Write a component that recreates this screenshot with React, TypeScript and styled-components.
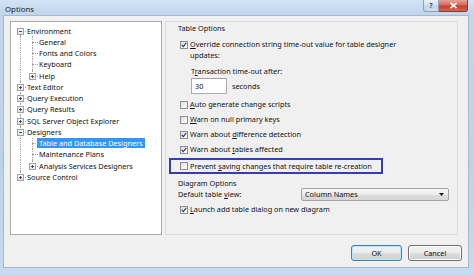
import React from 'react';
import styled, { createGlobalStyle } from 'styled-components';

const GlobalStyle = createGlobalStyle`
  html, body {
    margin: 0;
    padding: 0;
    background: #ffffff;
  }
  body {
    font-family: "Noto Sans", "Open Sans", sans-serif;
    font-size: 7.3px;
    color: #101010;
  }
`;

const colors = {
  frame: '#bcd3ec',
  face: '#f0f0f0',
  border: '#a9b8c8',
  treeLine: '#a3a3a3',
  select: '#3396f6',
  note: '#3a3cae'
};

const Window = styled.div`
  width: 474px;
  height: 275px;
  display: flex;
  flex-direction: column;
  background: linear-gradient(180deg, #d3e4f5 0%, #c2d7ee 12px, #bcd3ec 60%, #c6daf0 100%);
  overflow: hidden;
`;

const TitleBar = styled.div`
  height: 15px;
  flex: none;
  display: flex;
  align-items: flex-start;
  padding: 0 6px 0 5px;
`;

const Title = styled.span`
  font-size: 7.8px;
  line-height: 19px;
  color: #1a1a1a;
`;

const CaptionButtons = styled.div`
  margin-left: auto;
  display: flex;
  height: 12px;
`;

const CaptionButton = styled.span<{ $close?: boolean }>`
  width: ${ p => p.$close ? '29px' : '16px' };
  height: 12px;
  box-sizing: border-box;
  display: flex;
  align-items: center;
  justify-content: center;
  border: 1px solid ${ p => p.$close ? '#8c3b33' : '#8ea1b6' };
  border-top: none;
  border-left: ${ p => p.$close ? 'none' : undefined };
  border-radius: ${ p => p.$close ? '0 0 3px 0' : '0 0 0 3px' };
  background: ${ p => p.$close
    ? 'linear-gradient(180deg, #e6a196 0%, #d46a5b 45%, #c2402f 55%, #d7644f 100%)'
    : 'linear-gradient(180deg, #e9f0f7 0%, #d7e2ed 45%, #c3d2e2 55%, #d2dfec 100%)' };
  color: #33475d;
  font-size: 7px;
  font-weight: bold;
  line-height: 1;
`;

const Client = styled.div`
  flex: 1;
  margin: 0 5px 7px 3px;
  border: 1px solid ${ colors.border };
  background: ${ colors.face };
  display: flex;
  flex-direction: column;
  padding: 5px 0 0 6px;
`;

const Main = styled.div`
  display: flex;
  height: 214px;
`;

const Tree = styled.div`
  width: 152px;
  box-sizing: border-box;
  border: 1px solid #adadad;
  background: #ffffff;
  padding: 3px 0 0 3px;
`;

const TreeRow = styled.div`
  height: 11.25px;
  display: flex;
  align-items: center;
`;

const Cell = styled.span<{ $up?: boolean, $down?: boolean, $right?: boolean }>`
  position: relative;
  width: 12px;
  height: 100%;
  flex: none;

  &:before {
    content: "";
    display: ${ p => (p.$up || p.$down) ? 'block' : 'none' };
    position: absolute;
    left: 6px;
    top: ${ p => p.$up ? '0' : '50%' };
    bottom: ${ p => p.$down ? '0' : '50%' };
    border-left: 1px dotted ${ colors.treeLine };
  }

  &:after {
    content: "";
    display: ${ p => p.$right ? 'block' : 'none' };
    position: absolute;
    left: 6px;
    right: 0;
    top: 50%;
    border-top: 1px dotted ${ colors.treeLine };
  }
`;

const Expander = styled.span<{ $open?: boolean }>`
  position: absolute;
  z-index: 1;
  left: 3px;
  top: calc(50% - 3px);
  width: 7px;
  height: 7px;
  box-sizing: border-box;
  border: 1px solid #a2a2a2;
  background: linear-gradient(180deg, #ffffff, #e2e2e2);

  &:before {
    content: "";
    position: absolute;
    left: 1px;
    top: 2px;
    width: 3px;
    border-top: 1px solid #4a4a4a;
  }

  &:after {
    content: "";
    display: ${ p => p.$open ? 'none' : 'block' };
    position: absolute;
    left: 2px;
    top: 1px;
    height: 3px;
    border-left: 1px solid #4a4a4a;
  }
`;

const NodeLabel = styled.span<{ $selected?: boolean }>`
  margin-left: -1px;
  padding: 0 2px;
  height: 10px;
  line-height: 10px;
  white-space: nowrap;
  background: ${ p => p.$selected ? colors.select : 'transparent' };
  color: ${ p => p.$selected ? '#ffffff' : 'inherit' };
`;

const Panel = styled.div`
  margin-left: 3px;
  width: 293px;
  box-sizing: border-box;
  border: 1px solid #d5dce3;
  padding: 1px 8px 0 12px;
  display: flex;
  flex-direction: column;
`;

const GroupLabel = styled.div`
  line-height: 11px;
`;

const CheckRow = styled.div<{ $top?: number }>`
  display: flex;
  align-items: center;
  margin-top: ${ p => p.$top ?? 0 }px;
  line-height: 11px;
  min-height: 15px;
`;

const CheckText = styled.span`
  white-space: nowrap;
`;

const Box = styled.span`
  width: 8px;
  height: 8px;
  box-sizing: border-box;
  flex: none;
  margin: 0 2px;
  border: 1px solid #8e8f8f;
  background: linear-gradient(135deg, #d9d9d9 0%, #f4f4f4 60%, #ffffff 100%);
  display: flex;
  align-items: center;
  justify-content: center;
`;

const TallRow = styled(CheckRow)`
  align-items: flex-start;
  margin-top: 5px;

  ${Box} {
    margin-top: 2px;
  }
`;

const Indented = styled.div`
  margin-left: 13px;
`;

const FieldLabel = styled.div`
  margin-top: 5px;
  line-height: 11px;
`;

const InputRow = styled.div`
  display: flex;
  align-items: center;
  margin-top: 1px;
  height: 16px;
`;

const TextBox = styled.div`
  width: 36px;
  height: 16px;
  box-sizing: border-box;
  border: 1px solid #abadb3;
  border-top-color: #9ca0a8;
  background: #ffffff;
  padding-left: 3px;
  line-height: 14px;
  margin-right: 5px;
`;

const Highlight = styled.div`
  width: 214px;
  height: 16px;
  box-sizing: border-box;
  margin: 1px 0 0 -9px;
  border: 2px solid ${ colors.note };
  padding-left: 7px;
  display: flex;
  align-items: center;
`;

const DiagramLabel = styled.div`
  margin-top: 4px;
  line-height: 10px;
`;

const ViewRow = styled.div`
  display: flex;
  align-items: center;
  justify-content: space-between;
  height: 14px;
  margin-top: -1px;
`;

const Select = styled.div`
  width: 148px;
  height: 13px;
  box-sizing: border-box;
  border: 1px solid #a3a3a3;
  border-radius: 2px;
  background: linear-gradient(180deg, #f6f6f6 0%, #ebebeb 50%, #dddddd 51%, #d6d6d6 100%);
  display: flex;
  align-items: center;
  padding: 0 4px 0 3px;
  line-height: 11px;

  svg {
    margin-left: auto;
  }
`;

const Buttons = styled.div`
  display: flex;
  justify-content: flex-end;
  gap: 6px;
  margin-top: 10px;
  padding-right: 6px;
`;

const Button = styled.div<{ $default?: boolean, $width: number }>`
  width: ${ p => p.$width }px;
  height: 16px;
  box-sizing: border-box;
  border: 1px solid ${ p => p.$default ? '#3c7fb1' : '#707070' };
  border-radius: 3px;
  box-shadow: inset 0 0 0 1px ${ p => p.$default ? '#bfe6fa' : '#fbfbfb' };
  background: linear-gradient(180deg, #f2f2f2 0%, #ebebeb 48%, #dddddd 52%, #cfcfcf 100%);
  display: flex;
  align-items: center;
  justify-content: center;
  line-height: 11px;
`;

type Node = {
  label: string,
  guides: boolean[],
  first?: boolean,
  next?: boolean,
  toggle?: 'open' | 'closed',
  selected?: boolean
};

const nodes: Node[] = [
  { label: 'Environment', guides: [], first: true, next: true, toggle: 'open' },
  { label: 'General', guides: [true], next: true },
  { label: 'Fonts and Colors', guides: [true], next: true },
  { label: 'Keyboard', guides: [true], next: true },
  { label: 'Help', guides: [true], toggle: 'closed' },
  { label: 'Text Editor', guides: [], next: true, toggle: 'closed' },
  { label: 'Query Execution', guides: [], next: true, toggle: 'closed' },
  { label: 'Query Results', guides: [], next: true, toggle: 'closed' },
  { label: 'SQL Server Object Explorer', guides: [], next: true, toggle: 'closed' },
  { label: 'Designers', guides: [], next: true, toggle: 'open' },
  { label: 'Table and Database Designers', guides: [true], next: true, selected: true },
  { label: 'Maintenance Plans', guides: [true], next: true },
  { label: 'Analysis Services Designers', guides: [true], toggle: 'closed' },
  { label: 'Source Control', guides: [], toggle: 'closed' }
];

function Check(props: { checked?: boolean }) {
  return <Box>
    { props.checked ?
      <svg width="6" height="6" viewBox="0 0 6 6">
        <path d="M0.7 2.9 L2.3 4.6 L5.3 0.9" fill="none" stroke="#24416e" strokeWidth="1.2" />
      </svg> : null }
  </Box>
}

function TreeNode({ node }: { node: Node }) {
  return <TreeRow>
    { node.guides.map((g, i) => <Cell key={ i } $up={ g } $down={ g } />) }
    <Cell $up={ !node.first } $down={ node.next } $right>
      { node.toggle ? <Expander $open={ node.toggle === 'open' } /> : null }
    </Cell>
    <NodeLabel $selected={ node.selected }>{ node.label }</NodeLabel>
  </TreeRow>
}

export default function App() {
  return <>
    <GlobalStyle />
    <Window>
      <TitleBar>
        <Title>Options</Title>
        <CaptionButtons>
          <CaptionButton>?</CaptionButton>
          <CaptionButton $close>
            <svg width="9" height="7" viewBox="0 0 9 7">
              <path d="M1.5 0.8 L7.5 6.2 M7.5 0.8 L1.5 6.2" stroke="#ffffff" strokeWidth="1.6" />
            </svg>
          </CaptionButton>
        </CaptionButtons>
      </TitleBar>

      <Client>
        <Main>
          <Tree>
            { nodes.map(n => <TreeNode key={ n.label } node={ n } />) }
          </Tree>

          <Panel>
            <GroupLabel>Table Options</GroupLabel>

            <TallRow>
              <Check checked />
              <CheckText>
                <u>O</u>verride connection string time-out value for table designer<br />updates:
              </CheckText>
            </TallRow>

            <Indented>
              <FieldLabel>T<u>r</u>ansaction time-out after:</FieldLabel>
              <InputRow>
                <TextBox>30</TextBox>
                <span>seconds</span>
              </InputRow>
            </Indented>

            <CheckRow $top={ 3 }>
              <Check />
              <CheckText><u>A</u>uto generate change scripts</CheckText>
            </CheckRow>
            <CheckRow>
              <Check />
              <CheckText><u>W</u>arn on null primary keys</CheckText>
            </CheckRow>
            <CheckRow>
              <Check checked />
              <CheckText>Warn about <u>d</u>ifference detection</CheckText>
            </CheckRow>
            <CheckRow>
              <Check checked />
              <CheckText>Warn about <u>t</u>ables affected</CheckText>
            </CheckRow>

            <Highlight>
              <Check />
              <CheckText>Prevent <u>s</u>aving changes that require table re-creation</CheckText>
            </Highlight>

            <DiagramLabel>Diagram Options</DiagramLabel>
            <ViewRow>
              <span>Default table <u>v</u>iew:</span>
              <Select>
                <span>Column Names</span>
                <svg width="5" height="3" viewBox="0 0 5 3">
                  <path d="M0 0 H5 L2.5 3 Z" fill="#1f1f1f" />
                </svg>
              </Select>
            </ViewRow>

            <CheckRow $top={ 1 }>
              <Check checked />
              <CheckText><u>L</u>aunch add table dialog on new diagram</CheckText>
            </CheckRow>
          </Panel>
        </Main>

        <Buttons>
          <Button $default $width={ 51 }>OK</Button>
          <Button $width={ 54 }>Cancel</Button>
        </Buttons>
      </Client>
    </Window>
  </>
}
